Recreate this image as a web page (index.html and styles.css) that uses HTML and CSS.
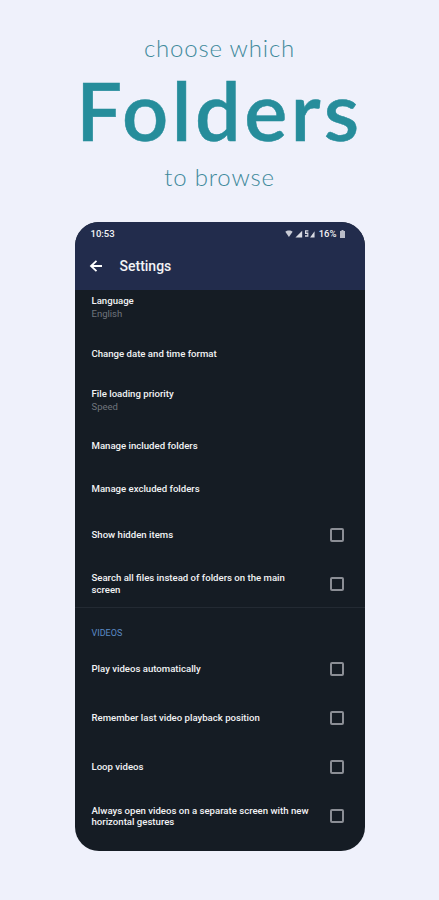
FILE: index.html
```html
<!DOCTYPE html>
<html lang="en">
<head>
    <meta charset="UTF-8">
    <meta name="viewport" content="width=device-width, initial-scale=1.0">
    <title>Choose which folders to browse</title>
    <link rel="stylesheet" href="styles.css">
</head>
<body>

    <header class="promo">
        <p class="promo-small">choose which</p>
        <h1 class="promo-big">Folders</h1>
        <p class="promo-small promo-last">to browse</p>
    </header>

    <main class="phone">
        <div class="appbar">
            <div class="statusbar">
                <span>10:53</span>
                <div class="status-right">
                    <svg class="status-icons" width="31" height="9" viewBox="0 0 27 8">
                        <path d="M0 2.5C1.5 .8 5 .8 6.5 2.5L3.2 7z" fill="#c9ccd6"/>
                        <path d="M9 7.5L15 1.5V7.5z" fill="#d8dae2"/>
                        <path d="M17.5 1h3v1.2h-2v1h2v3.6h-3v-1.2h2v-1.2h-2zM22 7.5L26 2v5.5z" fill="#d8dae2"/>
                    </svg>
                    <span>16%</span>
                    <svg width="5" height="8" viewBox="0 0 5 8">
                        <path d="M1.5 0h2v1H5v7H0V1h1.5z" fill="#b9bcc8"/>
                    </svg>
                </div>
            </div>
            <div class="toolbar">
                <svg width="14" height="14" viewBox="0 0 14 14">
                    <path d="M13 7H2.5M7.5 1.8L2 7l5.5 5.2" fill="none" stroke="#fff" stroke-width="1.8"/>
                </svg>
                <span class="toolbar-title">Settings</span>
            </div>
        </div>

        <div class="list">
            <div class="row row-first">
                <div>
                    <div class="row-title">Language</div>
                    <div class="row-sub">English</div>
                </div>
            </div>
            <div class="row">
                <div class="row-title">Change date and time format</div>
            </div>
            <div class="row row-tall">
                <div>
                    <div class="row-title">File loading priority</div>
                    <div class="row-sub">Speed</div>
                </div>
            </div>
            <div class="row row-short">
                <div class="row-title">Manage included folders</div>
            </div>
            <div class="row row-shorter">
                <div class="row-title">Manage excluded folders</div>
            </div>
            <div class="row row-check row-first-check">
                <div class="row-title">Show hidden items</div>
                <span class="checkbox"></span>
            </div>
            <div class="row row-divided">
                <div class="row-title">Search all files instead of folders on the main screen</div>
                <span class="checkbox"></span>
            </div>

            <div class="section-label">VIDEOS</div>

            <div class="row row-check">
                <div class="row-title">Play videos automatically</div>
                <span class="checkbox"></span>
            </div>
            <div class="row row-check">
                <div class="row-title">Remember last video playback position</div>
                <span class="checkbox"></span>
            </div>
            <div class="row row-check">
                <div class="row-title">Loop videos</div>
                <span class="checkbox"></span>
            </div>
            <div class="row row-check">
                <div class="row-title">Always open videos on a separate screen with new horizontal gestures</div>
                <span class="checkbox"></span>
            </div>
        </div>
    </main>

</body>
</html>
```

FILE: styles.css
```css
body {
    margin: 0;
    height: 900px;
    overflow: hidden;
    background-color: #eff1fb;
    font-family: Roboto, 'Liberation Sans', sans-serif;
}

.promo {
    padding-top: 33px;
    text-align: center;
    font-family: Lato, 'Open Sans', sans-serif;
}

.promo-small {
    margin: 0;
    height: 30px;
    line-height: 30px;
    font-size: 24px;
    font-weight: 300;
    letter-spacing: 0.8px;
    color: #3f8a9c;
}

.promo-big {
    margin: 0;
    height: 98px;
    line-height: 94px;
    font-size: 81px;
    font-weight: 600;
    letter-spacing: 3.5px;
    color: #268d9b;
    -webkit-text-stroke: 0.5px #268d9b;
}

.promo-last {
    margin-top: 1px;
}

.phone {
    margin: 30px auto 0;
    width: 290px;
    height: 629px;
    border-radius: 24px;
    overflow: hidden;
    background-color: #151c24;
    color: #f2f3f5;
}

.appbar {
    height: 68px;
    background-color: #222c4c;
}

.statusbar {
    height: 23px;
    padding: 0 20px 0 16px;
    display: flex;
    align-items: center;
    justify-content: space-between;
    font-size: 9.5px;
    font-weight: 500;
}

.status-right {
    display: flex;
    align-items: center;
    gap: 3px;
}

.toolbar {
    height: 41px;
    padding: 0 14px;
    display: flex;
    align-items: center;
    gap: 17px;
}

.toolbar-title {
    font-size: 14px;
    font-weight: 500;
}

.list {
    margin-top: -6px;
}

.row {
    height: 46px;
    padding: 0 21px 0 17px;
    display: flex;
    align-items: center;
    justify-content: space-between;
    box-sizing: border-box;
}

.row-first {
    height: 47px;
}

.row-tall {
    height: 47px;
}

.row-short {
    height: 44px;
}

.row-shorter {
    height: 41px;
}

.row-check {
    height: 49px;
}

.row-first-check {
    height: 51px;
}

.row-divided {
    height: 48px;
    border-bottom: 1px solid #232a33;
}

.row-title {
    max-width: 220px;
    font-size: 9.6px;
    font-weight: 500;
    line-height: 11.5px;
}

.row-sub {
    font-size: 9.5px;
    line-height: 13px;
    color: #6f747c;
}

.section-label {
    height: 36.5px;
    padding: 20px 0 0 17px;
    box-sizing: border-box;
    font-size: 9px;
    line-height: 11px;
    color: #5b8ac4;
}

.checkbox {
    width: 10px;
    height: 10px;
    flex: none;
    border: 2px solid #8b8e95;
    border-radius: 2px;
}
```
